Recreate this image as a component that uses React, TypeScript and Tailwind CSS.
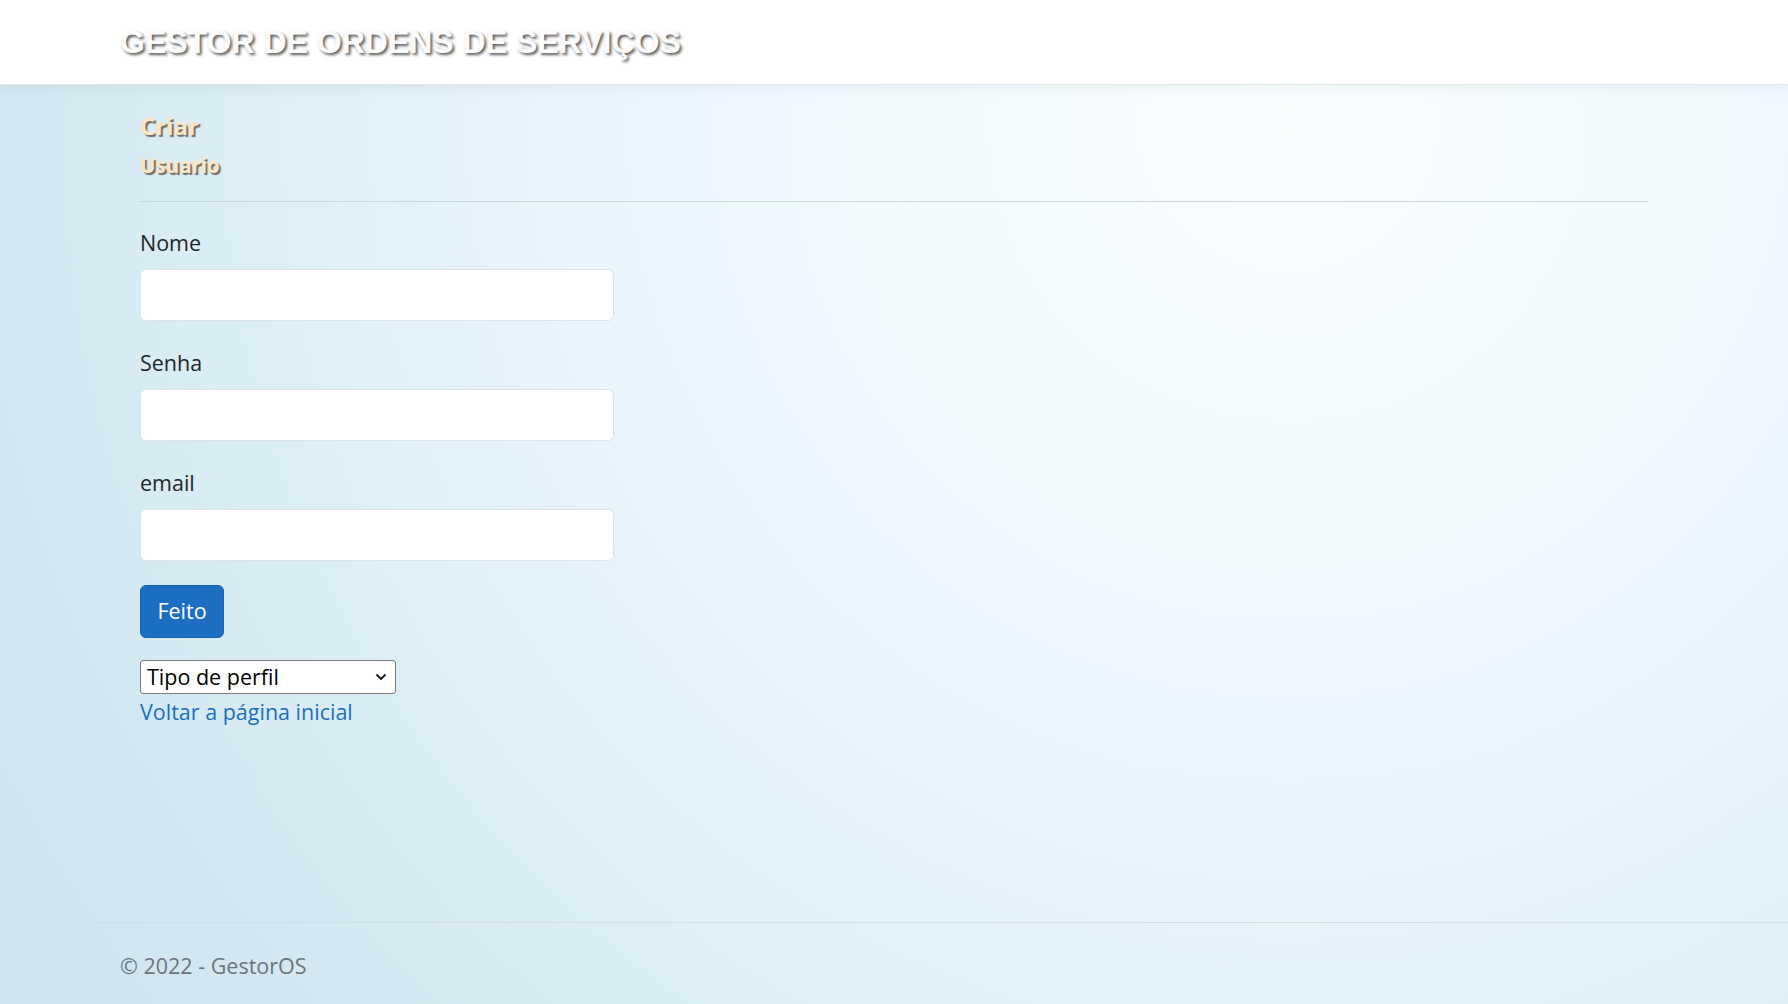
export default function App() {
    const body = "font-['Open_Sans','Noto_Sans',sans-serif]";

    return (
        <div className={`min-h-screen flex flex-col bg-[radial-gradient(circle_at_72%_12%,#fafeff_0%,#f0f9fd_32%,#e3f2f8_56%,#d3e8f1_84%,#cfe4ee_100%)] ${body}`}>

            <header className="h-[85px] flex items-center pl-[120px] bg-white border-b border-[#e3e6e8] shadow-[0_4px_12px_rgba(0,0,0,0.05)]">
                <span className="font-['Liberation_Sans',Arial,sans-serif] font-bold text-[32px] leading-none text-[#fbfbfb] [text-shadow:2px_2px_3px_rgba(0,0,0,0.65)]">
                    GESTOR DE ORDENS DE SERVIÇOS
                </span>
            </header>

            <main className="flex-1 px-[140px]">
                <h1 className="mt-[25px] text-[24px] leading-[32px] font-bold text-[#fde6c6] [text-shadow:2px_2px_1px_rgba(70,55,40,0.7)]">
                    Criar
                </h1>
                <h2 className="mt-[10px] text-[20.5px] leading-[26px] font-bold text-[#fde6c6] [text-shadow:2px_2px_1px_rgba(70,55,40,0.7)]">
                    Usuario
                </h2>

                <hr className="mt-[23px] border-0 border-t border-[#c9d8df]" />

                <form className="w-[474px]">
                    <div className="mt-[26px]">
                        <label className="block text-[21.5px] leading-[30px] text-[#212529]">Nome</label>
                        <input type="text" className="mt-[11px] block w-full h-[52px] bg-white border border-[#dde3e7] rounded-[6px] px-4 outline-none" />
                    </div>

                    <div className="mt-[27px]">
                        <label className="block text-[21.5px] leading-[30px] text-[#212529]">Senha</label>
                        <input type="password" className="mt-[11px] block w-full h-[52px] bg-white border border-[#dde3e7] rounded-[6px] px-4 outline-none" />
                    </div>

                    <div className="mt-[27px]">
                        <label className="block text-[21.5px] leading-[30px] text-[#212529]">email</label>
                        <input type="email" className="mt-[11px] block w-full h-[52px] bg-white border border-[#dde3e7] rounded-[6px] px-4 outline-none" />
                    </div>

                    <button type="button" className="mt-[24px] w-[84px] h-[53px] bg-[#1b6ec2] border border-[#1861ac] rounded-[6px] text-white text-[21.5px]">
                        Feito
                    </button>
                </form>

                <div className="relative mt-[22px] w-[256px]">
                    <select className="appearance-none block w-full h-[34px] bg-white border border-[#7a7a7a] rounded-[3px] pl-[6px] text-[21.5px] leading-[30px] text-black outline-none">
                        <option>Tipo de perfil</option>
                    </select>
                    <svg className="absolute right-[9px] top-[13px] pointer-events-none" width="12" height="8" viewBox="0 0 12 8" fill="none">
                        <path d="M1.5 1.5l4.5 4.5 4.5-4.5" stroke="#111" strokeWidth="1.8" />
                    </svg>
                </div>

                <a href="#" className="block w-fit mt-[3px] text-[21.5px] leading-[30px] text-[#1b6ec2]">
                    Voltar a página inicial
                </a>
            </main>

            <footer className="h-[82px] border-t border-[#d3dfe5] pl-[120px] pt-[28px]">
                <span className="text-[21.5px] leading-[30px] text-[#6c757d]">© 2022 - GestorOS</span>
            </footer>

        </div>
    );
}
